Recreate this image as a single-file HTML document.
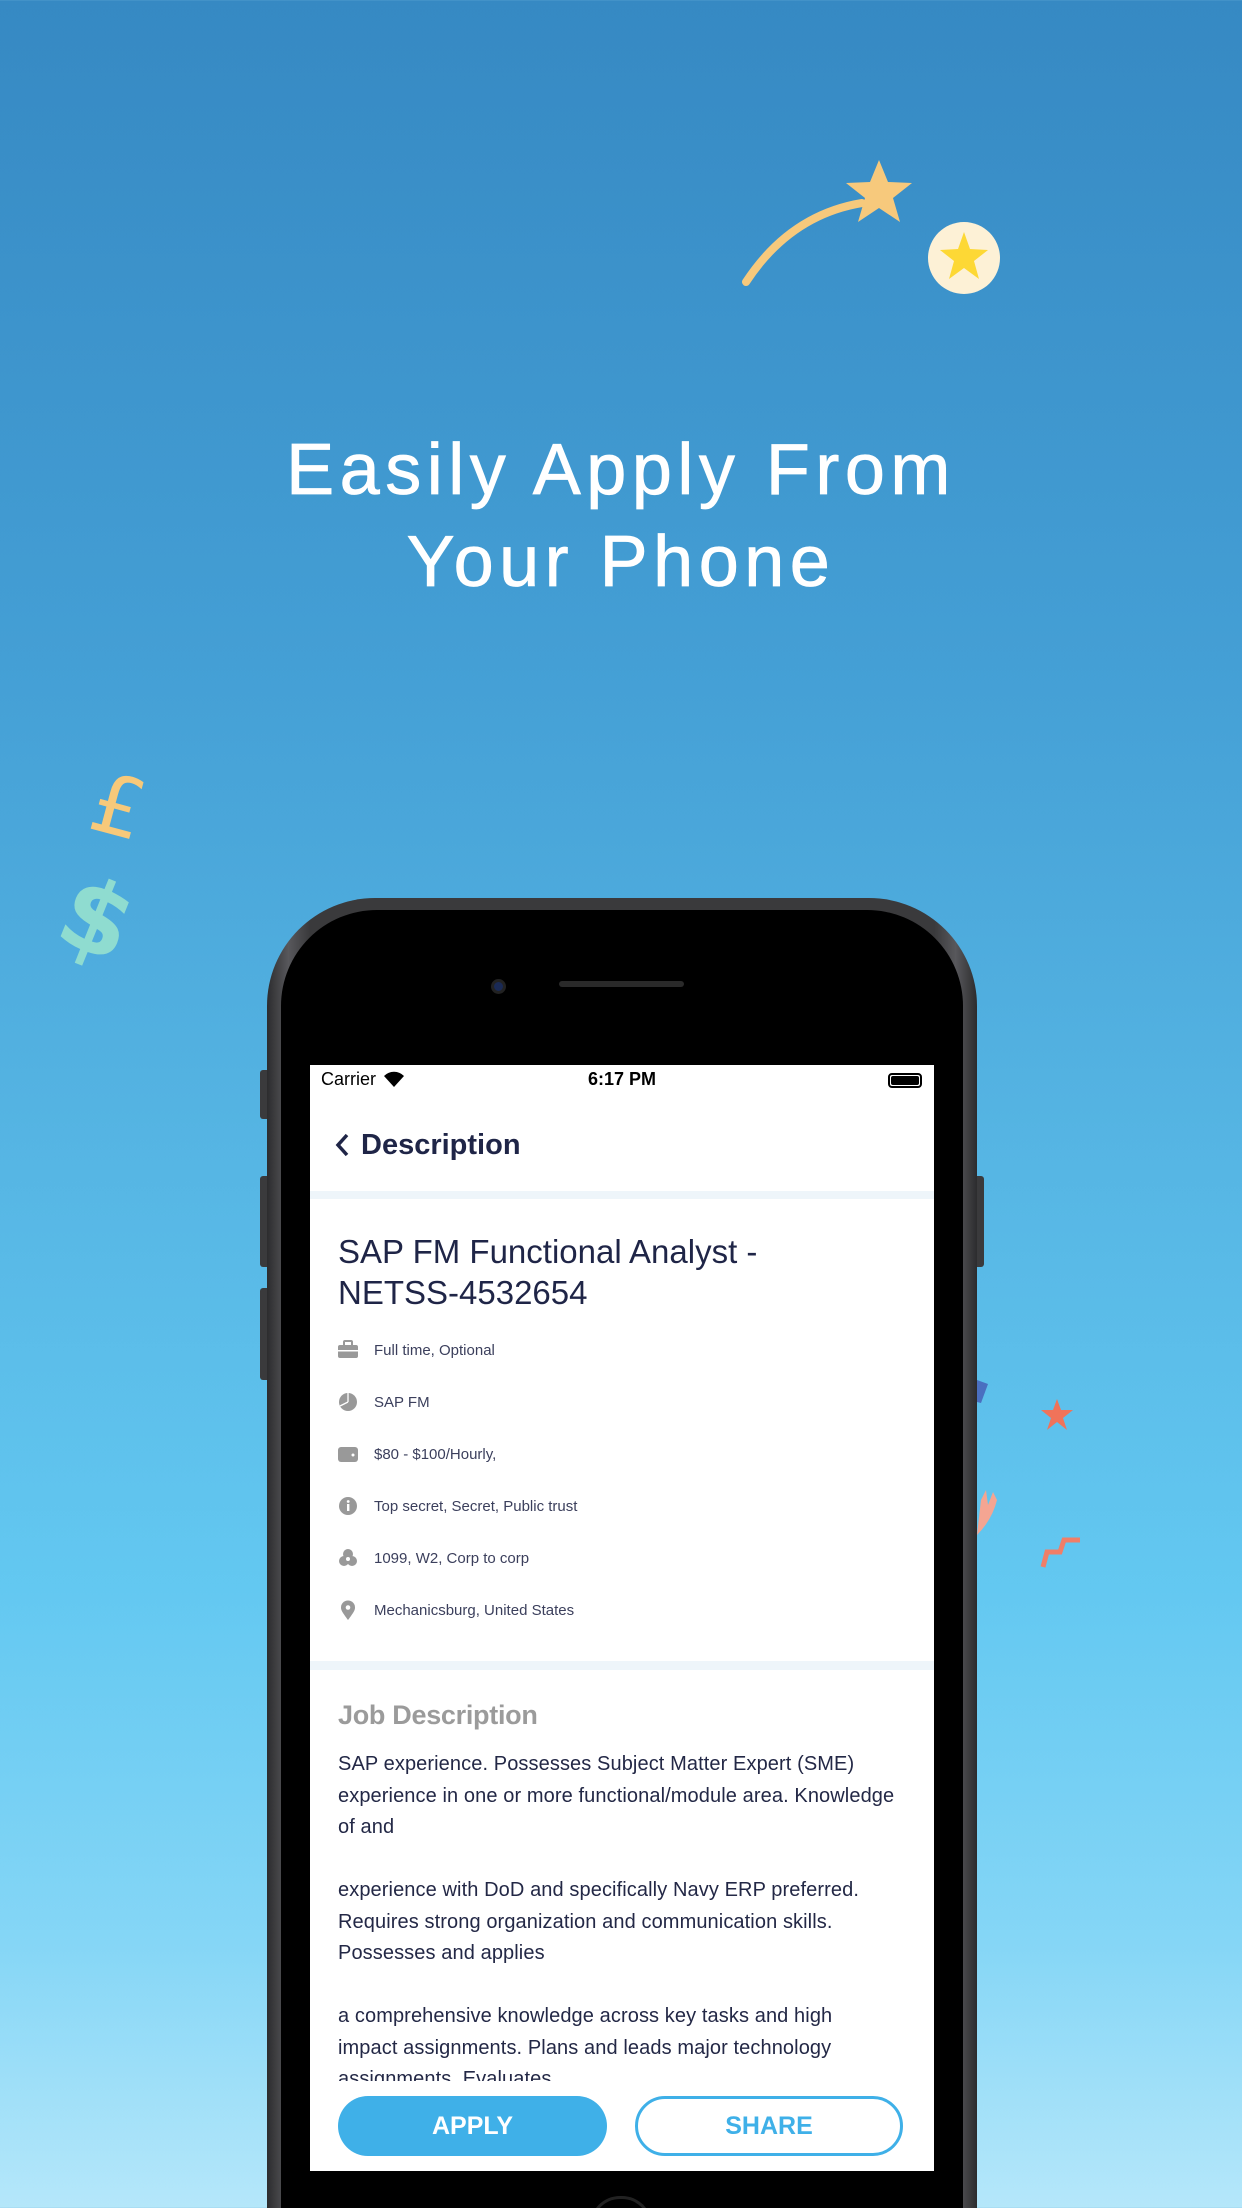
<!DOCTYPE html>
<html><head><meta charset="utf-8"><style>
*{margin:0;padding:0;box-sizing:border-box}
html,body{width:1242px;height:2208px;overflow:hidden}
body{position:relative;font-family:"Liberation Sans",sans-serif;background:linear-gradient(180deg,#3689c3 0%,#449fd5 30%,#54b3e2 50%,#63c8f1 72%,#85d6f6 88%,#b5e7fa 100%)}
.abs{position:absolute}
.title{position:absolute;left:0;width:1242px;text-align:center;color:#fff;font-size:72px;letter-spacing:5.5px;line-height:92px;top:424px;-webkit-text-stroke:0.8px #fff}
.phone{position:absolute;left:267px;top:898px;width:710px;height:1420px;border-radius:108px;background:linear-gradient(90deg,#2c2c2e,#58585c 3%,#3a3a3c 6%,#3a3a3c 94%,#58585c 97%,#2c2c2e)}
.inner{position:absolute;left:14px;top:12px;right:14px;bottom:0;border-radius:96px;background:#000}
.screen{position:absolute;left:310px;top:1065px;width:624px;height:1106px;background:#fff;overflow:hidden;color:#1f2547}
.btn{position:absolute;width:70px;background:#3a3a3c;border-radius:3px}
.row{position:absolute;left:64px;font-size:15px;color:#3b3f5c}
.ic{position:absolute;left:28px;width:20px;height:20px}
.body p{white-space:nowrap;font-size:20px;line-height:31.5px;letter-spacing:0.1px;color:#232846}
</style></head><body>
<div class="title">Easily Apply From<br>Your Phone</div>

<svg class="abs" style="left:0;top:0" width="1242" height="2208">
<path d="M746 282 Q790 215 862 203" stroke="#f7c97c" stroke-width="8" fill="none" stroke-linecap="round"/>
<polygon fill="#f7c97c" points="879,160 888,182 912,183 893,198 900,222 879,208 858,222 865,198 846,183 870,182"/>
<circle cx="964" cy="258" r="36" fill="#fdf1d6"/>
<polygon fill="#fdd835" points="964,232 970,249 988,250 974,261 979,279 964,268 949,279 954,261 940,250 958,249"/>
<polygon fill="#f0735a" points="1057,1399 1061,1410 1073,1410 1063,1418 1067,1430 1057,1422 1047,1430 1051,1418 1041,1410 1053,1410"/>
<path d="M1043 1567 L1047 1552 L1060 1552 L1064 1540 L1080 1540" stroke="#f07e68" stroke-width="5" fill="none"/>
<path d="M977 1380 L988 1384 L981 1403 L977 1402Z" fill="#4a6fc0"/>
<path d="M977 1535 Q992 1520 997 1500 L993 1492 L988 1505 L986 1490 L981 1500 Z" fill="#f4a592"/>
</svg>
<div class="abs" style="left:92px;top:760px;font-size:82px;color:#f7c97a;transform:rotate(15deg);font-family:'DejaVu Sans',sans-serif">£</div>
<div class="abs" style="left:62px;top:860px;font-size:100px;font-weight:bold;color:#8fdcd0;transform:rotate(22deg);font-family:'DejaVu Sans',sans-serif">$</div>

<div class="btn" style="left:260px;top:1070px;height:49px;width:10px"></div>
<div class="btn" style="left:260px;top:1176px;height:91px;width:10px"></div>
<div class="btn" style="left:260px;top:1288px;height:92px;width:10px"></div>
<div class="btn" style="left:974px;top:1176px;height:91px;width:10px"></div>
<div class="phone"><div class="inner"></div></div>
<div class="abs" style="left:491px;top:979px;width:15px;height:15px;border-radius:50%;background:#1a2a55;border:3px solid #222"></div>
<div class="abs" style="left:559px;top:981px;width:125px;height:6px;border-radius:3px;background:#2a2a2a"></div>
<div class="abs" style="left:590px;top:2196px;width:62px;height:30px;border-radius:31px 31px 0 0;border:3px solid #222;border-bottom:none"></div>

<div class="screen">
 <div class="abs" style="left:11px;top:4px;font-size:18px;color:#000">Carrier</div>
 <svg class="abs" style="left:72px;top:5px" width="24" height="18" viewBox="0 0 24 18"><path d="M12 17 L2 6 A14 14 0 0 1 22 6Z" fill="#000"/></svg>
 <div class="abs" style="left:0;width:624px;text-align:center;top:4px;font-size:18px;font-weight:bold;color:#000">6:17 PM</div>
 <div class="abs" style="left:578px;top:8px;width:34px;height:15px;border:2px solid #000;border-radius:4px;padding:1px"><div style="background:#000;width:100%;height:100%;border-radius:2px"></div></div>
 <svg class="abs" style="left:23px;top:67px" width="18" height="26"><path d="M14 3 L5 13 L14 23" stroke="#1f2547" stroke-width="3.5" fill="none"/></svg>
 <div class="abs" style="left:51px;top:64px;font-size:29px;font-weight:bold;color:#1f2547">Description</div>
 <div class="abs" style="left:0;top:126px;width:624px;height:8px;background:#eef5fa"></div>
 <div class="abs" style="left:28px;top:166px;font-size:33px;line-height:41px;color:#1f2547">SAP FM Functional Analyst -<br>NETSS-4532654</div>
 <svg class="ic" style="top:275px"><rect x="0" y="5" width="20" height="13" rx="2" fill="#999"/><rect x="6" y="1" width="8" height="5" rx="1" fill="none" stroke="#999" stroke-width="2"/><rect x="0" y="10" width="20" height="1.5" fill="#fff"/></svg>
 <div class="row" style="top:277px">Full time, Optional</div>
 <svg class="ic" style="top:327px"><circle cx="10" cy="10" r="9" fill="#999"/><path d="M10 10 L10 1 M10 10 L2 14" stroke="#fff" stroke-width="1.3"/></svg>
 <div class="row" style="top:329px">SAP FM</div>
 <svg class="ic" style="top:379px"><rect x="0" y="3" width="20" height="15" rx="3" fill="#999"/><circle cx="15" cy="11" r="1.5" fill="#fff"/></svg>
 <div class="row" style="top:381px">$80 - $100/Hourly,</div>
 <svg class="ic" style="top:431px"><circle cx="10" cy="10" r="9" fill="#999"/><rect x="9" y="8" width="2.4" height="7" fill="#fff"/><circle cx="10.2" cy="5.5" r="1.4" fill="#fff"/></svg>
 <div class="row" style="top:433px">Top secret, Secret, Public trust</div>
 <svg class="ic" style="top:483px"><circle cx="10" cy="6" r="5" fill="#999"/><circle cx="6" cy="13" r="5" fill="#999"/><circle cx="14" cy="13" r="5" fill="#999"/><circle cx="10" cy="11" r="2" fill="#fff"/></svg>
 <div class="row" style="top:485px">1099, W2, Corp to corp</div>
 <svg class="ic" style="top:535px"><path d="M10 20 C4 12 3 10 3 7.5 A7 7 0 0 1 17 7.5 C17 10 16 12 10 20Z" fill="#999"/><circle cx="10" cy="7.5" r="2.3" fill="#fff"/></svg>
 <div class="row" style="top:537px">Mechanicsburg, United States</div>
 <div class="abs" style="left:0;top:596px;width:624px;height:9px;background:#eef5fa"></div>
 <div class="abs" style="left:28px;top:635px;font-size:27px;font-weight:bold;color:#9b9b9b;letter-spacing:-0.3px">Job Description</div>
 <div class="abs body" style="left:28px;top:684px;height:332px;overflow:hidden">
  <p>SAP experience. Possesses Subject Matter Expert (SME)</p>
  <p>experience in one or more functional/module area. Knowledge</p>
  <p>of and</p><p>&nbsp;</p>
  <p>experience with DoD and specifically Navy ERP preferred.</p>
  <p>Requires strong organization and communication skills.</p>
  <p>Possesses and applies</p><p>&nbsp;</p>
  <p>a comprehensive knowledge across key tasks and high</p>
  <p>impact assignments. Plans and leads major technology</p>
  <p>assignments. Evaluates</p>
 </div>
 <div class="abs" style="left:28px;top:1031px;width:269px;height:60px;border-radius:30px;background:#3fb0e8;color:#fff;font-size:25px;font-weight:bold;text-align:center;line-height:60px">APPLY</div>
 <div class="abs" style="left:325px;top:1031px;width:268px;height:60px;border-radius:30px;border:3px solid #3fb0e8;color:#3fb0e8;font-size:25px;font-weight:bold;text-align:center;line-height:54px">SHARE</div>
</div>
</body></html>
